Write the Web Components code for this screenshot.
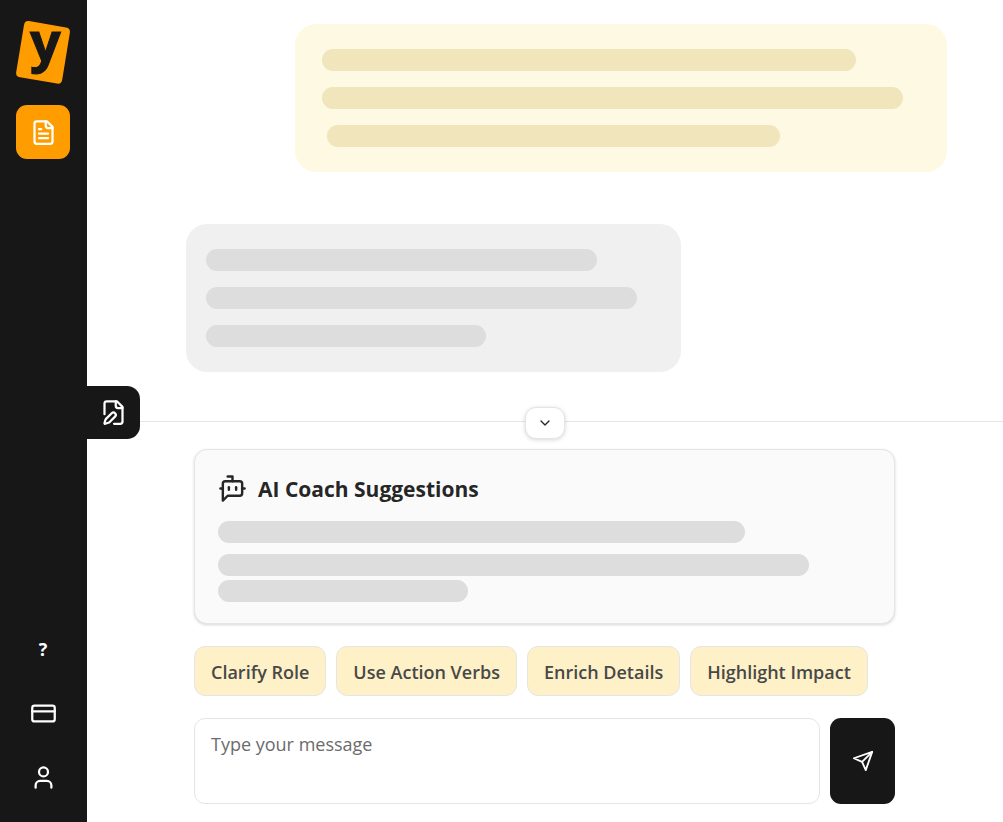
<!DOCTYPE html>
<html lang="en">
<head>
<meta charset="utf-8">
<meta name="viewport" content="width=device-width, initial-scale=1">
<title>AI Coach</title>
<style>
  body { margin: 0; background: #fff; font-family: "Segoe UI", "Open Sans", "Noto Sans", sans-serif; color: #262626; }
</style>
</head>
<body>
<coach-app></coach-app>

<script>
const ICONS = {
  file: '<path d="M15 2H6a2 2 0 0 0-2 2v16a2 2 0 0 0 2 2h12a2 2 0 0 0 2-2V7Z"/><path d="M14 2v4a2 2 0 0 0 2 2h4"/><path d="M10 9H8"/><path d="M16 13H8"/><path d="M16 17H8"/>',
  edit: '<path d="M12.5 22H18a2 2 0 0 0 2-2V7l-5-5H6a2 2 0 0 0-2 2v9.5"/><path d="M14 2v4a2 2 0 0 0 2 2h4"/><path d="M13.378 15.626a1 1 0 1 0-3.004-3.004l-5.01 5.012a2 2 0 0 0-.506.854l-.837 2.87a.5.5 0 0 0 .62.62l2.87-.837a2 2 0 0 0 .854-.506z"/>',
  card: '<rect x="2" y="5" width="20" height="14" rx="2"/><path d="M2 10h20"/>',
  user: '<path d="M19 21v-2a4 4 0 0 0-4-4H9a4 4 0 0 0-4 4v2"/><circle cx="12" cy="7" r="4"/>',
  bot: '<path d="M12 6V2H8"/><path d="m8 18-4 4V8a2 2 0 0 1 2-2h12a2 2 0 0 1 2 2v8a2 2 0 0 1-2 2Z"/><path d="M2 12h2"/><path d="M9 11v2"/><path d="M15 11v2"/><path d="M20 12h2"/>',
  send: '<path d="M22 2 11 13"/><path d="M22 2 15 22 11 13 2 9Z"/>',
  down: '<path d="m6 9 6 6 6-6"/>'
};

function define(name, html, setup) {
  const tpl = document.createElement('template');
  tpl.innerHTML = html;
  customElements.define(name, class extends HTMLElement {
    constructor() {
      super();
      this.attachShadow({ mode: 'open' }).append(tpl.content.cloneNode(true));
    }
    connectedCallback() { if (setup) setup(this, this.shadowRoot); }
  });
}

define('ui-icon', `
  <style>
    :host { display: block; width: var(--icon-size, 27px); height: var(--icon-size, 27px); }
    svg { display: block; width: 100%; height: 100%; fill: none; stroke: currentColor; stroke-width: 2; stroke-linecap: round; stroke-linejoin: round; }
  </style>
  <svg viewBox="0 0 24 24" aria-hidden="true"></svg>`,
  (el, root) => { root.querySelector('svg').innerHTML = ICONS[el.getAttribute('name')]; });

define('nav-button', `
  <style>
    :host { display: block; }
    button { display: flex; align-items: center; justify-content: center; width: 54px; height: 54px; padding: 0; border: 0; border-radius: 11px; background: transparent; color: #fff; font: 700 18px/24px "Open Sans", "Noto Sans", sans-serif; cursor: pointer; }
    :host([active]) button { background: #ff9d00; }
  </style>
  <button type="button"><slot></slot></button>`,
  (el, root) => root.querySelector('button').setAttribute('aria-label', el.getAttribute('label')));

define('brand-logo', `
  <style>
    :host { display: block; width: 54px; height: 64px; }
    svg { display: block; overflow: visible; }
    text { font: 700 54px "Open Sans", "Noto Sans", sans-serif; fill: #171717; stroke: #171717; stroke-width: 1px; }
  </style>
  <svg width="54" height="64" viewBox="0 0 54 64" role="img" aria-label="Logo">
    <path d="M13 1 50 7.400Q54.500 8.200 53.900 12.500L46.200 59.800Q45.400 64.300 41 63.600L4 57.300Q-.400 56.500 .200 52.200L8 4.900Q8.800.300 13 1Z" fill="#ff9d00"/>
    <text x="14" y="41">y</text>
  </svg>`);

define('side-bar', `
  <style>
    :host { display: flex; flex-direction: column; align-items: center; box-sizing: border-box; width: 87px; padding: 20px 17px 18px 16px; background: #171717; }
    nav { display: contents; }
    .top, .bottom { display: flex; flex-direction: column; }
    .top { gap: 21px; }
    .bottom { gap: 10px; margin-top: auto; }
  </style>
  <nav>
    <div class="top">
      <brand-logo></brand-logo>
      <nav-button label="Documents" active><ui-icon name="file"></ui-icon></nav-button>
    </div>
    <div class="bottom">
      <nav-button label="Help">?</nav-button>
      <nav-button label="Billing"><ui-icon name="card"></ui-icon></nav-button>
      <nav-button label="Account"><ui-icon name="user"></ui-icon></nav-button>
    </div>
  </nav>`);

define('skeleton-bar', `
  <style>
    :host { display: block; max-width: 100%; height: 22px; border-radius: 11px; background: var(--bar, #ddd); }
  </style>`,
  el => { el.style.width = el.getAttribute('width') + 'px'; });

define('chat-bubble', `
  <style>
    :host { display: flex; flex-direction: column; gap: 16px; box-sizing: border-box; width: 100%; max-width: 495px; padding: 25px 20px; border-radius: 21px; background: #f0f0f0; }
    :host([from="user"]) { --bar: #f1e5bc; align-self: flex-end; max-width: 652px; padding: 25px 27px; background: #fef9e3; }
    ::slotted([indent]) { margin-left: 5px; }
  </style>
  <slot></slot>`);

define('coach-card', `
  <style>
    :host { display: block; padding: 23px 23px 21px; border: 1px solid #e5e5e5; border-radius: 13px; background: #fafafa; box-shadow: 0 1px 3px rgba(0,0,0,.16); }
    header { display: flex; align-items: center; gap: 11px; height: 30px; margin-bottom: 18px; --icon-size: 29px; }
    h2 { margin: 0; font-size: 21px; line-height: 30px; padding-top: 2px; font-weight: 700; color: #262626; }
    .bars { display: flex; flex-direction: column; gap: 4px; }
    .bars skeleton-bar:first-child { margin-bottom: 7px; }
  </style>
  <header><ui-icon name="bot"></ui-icon><h2><slot></slot></h2></header>
  <div class="bars">
    <skeleton-bar width="527"></skeleton-bar>
    <skeleton-bar width="591"></skeleton-bar>
    <skeleton-bar width="250"></skeleton-bar>
  </div>`);

define('suggestion-chip', `
  <style>
    :host { display: block; }
    button { height: 50px; padding: 2px 16px 0; border: 1px solid #e5e5e5; border-radius: 11px; background: #fef1c7; color: #484848; font: 600 18px/24px "Open Sans", "Noto Sans", sans-serif; white-space: nowrap; cursor: pointer; }
  </style>
  <button type="button"><slot></slot></button>`);

define('message-composer', `
  <style>
    :host { display: block; }
    form { display: flex; gap: 10px; margin: 0; }
    textarea { flex: 1; min-width: 0; box-sizing: border-box; height: 86px; padding: 11px 16px; border: 1px solid #e5e5e5; border-radius: 11px; resize: none; background: #fff; color: #262626; font: 400 18px/28px "Open Sans", "Noto Sans", sans-serif; outline: none; }
    textarea::placeholder { color: #6b6b6b; opacity: 1; }
    button { display: flex; align-items: center; justify-content: center; width: 65px; height: 86px; padding: 0; border: 0; border-radius: 11px; background: #171717; color: #fff; cursor: pointer; --icon-size: 22px; }
  </style>
  <form>
    <textarea placeholder="Type your message" aria-label="Type your message"></textarea>
    <button type="submit" aria-label="Send"><ui-icon name="send"></ui-icon></button>
  </form>`,
  (el, root) => root.querySelector('form').addEventListener('submit', e => e.preventDefault()));

define('coach-dock', `
  <style>
    :host { display: block; position: relative; border-top: 1px solid #e5e5e5; padding: 27px 25px 18px 24px; }
    .inner { display: flex; flex-direction: column; max-width: 701px; margin: 0 auto; }
    .chips { display: flex; flex-wrap: wrap; gap: 10px; margin: 22px 0; }
    .toggle { position: absolute; top: -15px; left: 50%; transform: translateX(-50%); display: flex; align-items: center; justify-content: center; width: 40px; height: 32px; padding: 0; border: 1px solid #e5e5e5; border-radius: 11px; background: #fff; color: #262626; box-shadow: 0 1px 4px rgba(0,0,0,.16); cursor: pointer; --icon-size: 16px; }
  </style>
  <button class="toggle" type="button" aria-label="Collapse suggestions"><ui-icon name="down"></ui-icon></button>
  <div class="inner">
    <coach-card>AI Coach Suggestions</coach-card>
    <div class="chips">
      <suggestion-chip>Clarify Role</suggestion-chip>
      <suggestion-chip>Use Action Verbs</suggestion-chip>
      <suggestion-chip>Enrich Details</suggestion-chip>
      <suggestion-chip>Highlight Impact</suggestion-chip>
    </div>
    <message-composer></message-composer>
  </div>`);

define('coach-app', `
  <style>
    :host { display: flex; min-height: 100vh; }
    main { position: relative; flex: 1; min-width: 0; display: flex; flex-direction: column; }
    .messages { flex: 1; display: flex; flex-direction: column; gap: 52px; padding: 24px 56px 49px 99px; }
    .drawer { position: absolute; left: 0; top: 386px; z-index: 1; display: flex; align-items: center; justify-content: center; width: 53px; height: 53px; padding: 0; border: 0; border-radius: 0 13px 13px 0; background: #171717; color: #fff; cursor: pointer; }
  </style>
  <side-bar></side-bar>
  <main>
    <button class="drawer" type="button" aria-label="Edit document"><ui-icon name="edit"></ui-icon></button>
    <section class="messages">
      <chat-bubble from="user">
        <skeleton-bar width="534"></skeleton-bar>
        <skeleton-bar width="581"></skeleton-bar>
        <skeleton-bar width="453" indent></skeleton-bar>
      </chat-bubble>
      <chat-bubble>
        <skeleton-bar width="391"></skeleton-bar>
        <skeleton-bar width="431"></skeleton-bar>
        <skeleton-bar width="280"></skeleton-bar>
      </chat-bubble>
    </section>
    <coach-dock></coach-dock>
  </main>`);
</script>
</body>
</html>
